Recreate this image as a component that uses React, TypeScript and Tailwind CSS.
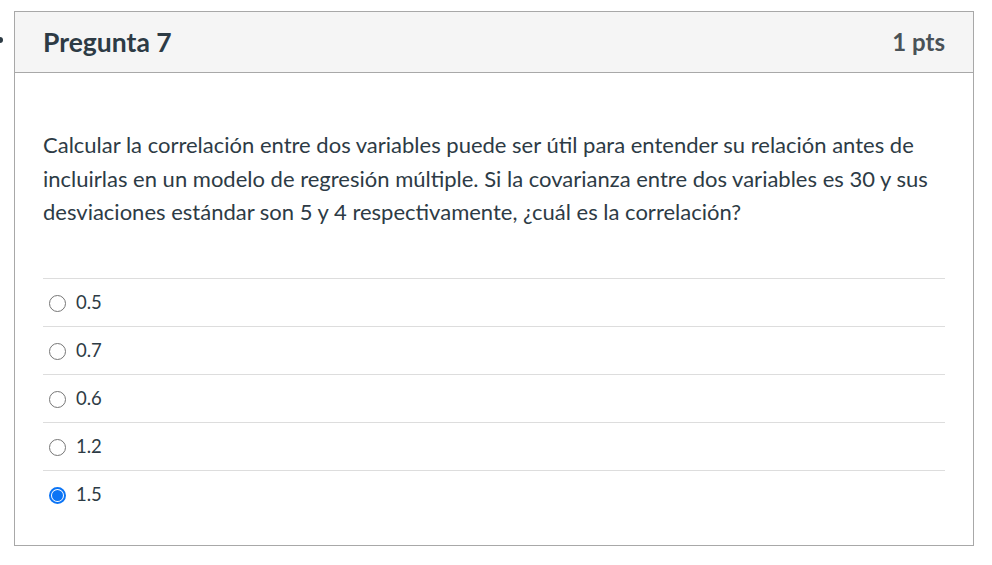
const answers = [
  { label: "0.5", checked: false },
  { label: "0.7", checked: false },
  { label: "0.6", checked: false },
  { label: "1.2", checked: false },
  { label: "1.5", checked: true },
];

const Radio = ({ checked }: { checked: boolean }) =>
  checked ? (
    <span className="flex h-[17px] w-[17px] items-center justify-center rounded-full border-2 border-[#0b74f5]">
      <span className="h-[11px] w-[11px] rounded-full bg-[#0b74f5]" />
    </span>
  ) : (
    <span className="h-[17px] w-[17px] rounded-full border border-[#767676] bg-white" />
  );

const App = () => {
  return (
    <div
      className="relative h-[565px] w-[992px] bg-white text-[#2d3b45]"
      style={{ fontFamily: "Lato, 'Liberation Sans', sans-serif" }}
    >
      <span className="absolute left-[-3px] top-[37px] h-[6px] w-[6px] rounded-full bg-[#2d3b45]" />
      <div className="pl-[14px] pt-[11px]">
        <div className="w-[960px] border border-[#a8a8a8]">
          <div className="flex h-[61px] items-center justify-between border-b border-[#a8a8a8] bg-[#f5f5f5] px-[28px]">
            <h3 className="text-[26.5px] font-bold leading-none">Pregunta 7</h3>
            <span className="text-[24px] font-bold leading-none text-[#4a5257]">1 pts</span>
          </div>
          <div className="px-[28px] pb-[27px] pt-[55px]">
            <p className="text-[22px] leading-[33.5px]">
              Calcular la correlación entre dos variables puede ser útil para entender su relación antes de
              incluirlas en un modelo de regresión múltiple. Si la covarianza entre dos variables es 30 y sus
              desviaciones estándar son 5 y 4 respectivamente, ¿cuál es la correlación?
            </p>
            <div className="mt-[49px]">
              {answers.map((a) => (
                <div key={a.label} className="flex h-[48px] items-center gap-[10px] border-t border-[#dddddd] pl-[6px] pt-[2px]">
                  <Radio checked={a.checked} />
                  <span className="text-[18.5px]">{a.label}</span>
                </div>
              ))}
            </div>
          </div>
        </div>
      </div>
    </div>
  );
};

export default App;
